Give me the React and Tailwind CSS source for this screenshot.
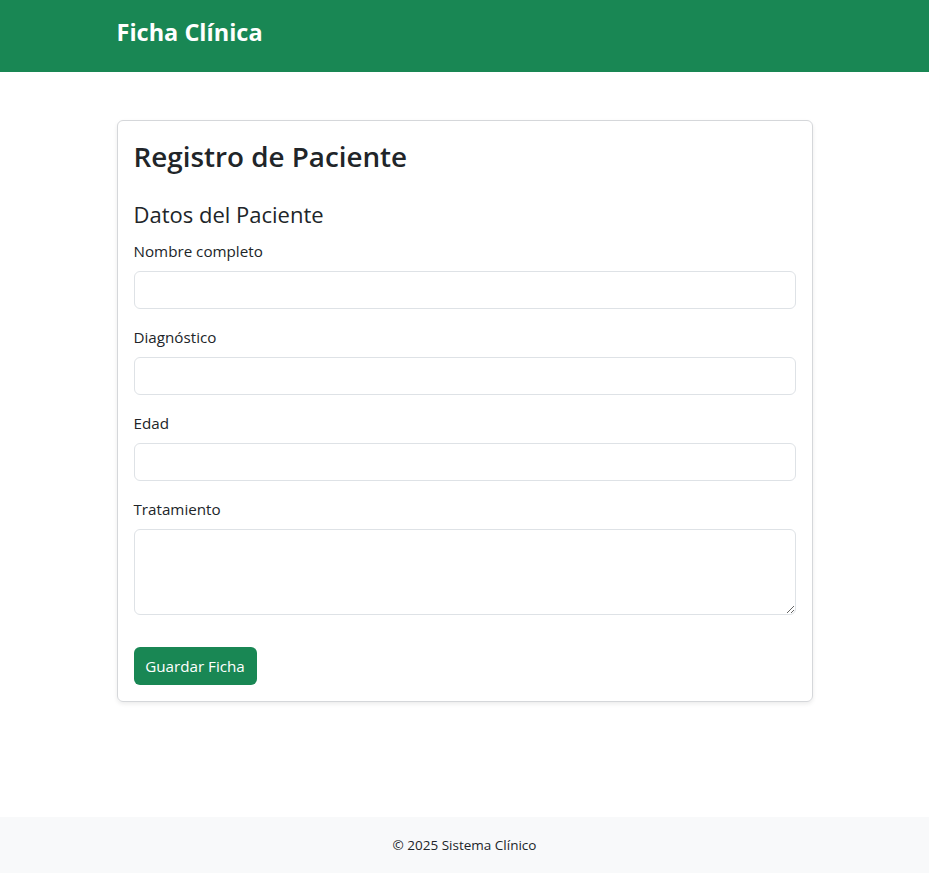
export default function App() {
  const font = { fontFamily: '"Open Sans", "Noto Sans", Arial, sans-serif' };
  return (
    <div className="min-h-screen flex flex-col bg-white text-[#212529]" style={font}>
      <nav className="h-[72px] bg-[#198754] flex items-center">
        <div className="w-[720px] mx-auto px-3 pb-[4px]">
          <span className="text-white font-bold text-[23.5px] leading-none">Ficha Clínica</span>
        </div>
      </nav>
      <main className="w-[720px] mx-auto px-3 mt-12">
        <div className="border border-[#d5d7da] rounded-[6px] shadow-[0_2px_4px_rgba(0,0,0,0.08)] p-4">
          <h2 className="text-[27.8px] font-semibold leading-[38px] mb-[25px]">Registro de Paciente</h2>
          <h4 className="text-[22px] leading-[28px] mb-[11px]">Datos del Paciente</h4>
          {["Nombre completo", "Diagnóstico", "Edad"].map((l) => (
            <div key={l} className="mb-4">
              <label className="block text-[15.2px] leading-6 mb-2">{l}</label>
              <input className="block w-full h-[38px] border border-[#dee2e6] rounded-[6px] px-3 outline-none" />
            </div>
          ))}
          <div className="mb-4">
            <label className="block text-[15.2px] leading-6 mb-2">Tratamiento</label>
            <textarea rows={3} className="block w-full h-[86px] border border-[#dee2e6] rounded-[6px] px-3 outline-none" />
          </div>
          <button className="mt-4 h-[38px] w-[123px] bg-[#198754] text-white text-[15.2px] rounded-[6px]">Guardar Ficha</button>
        </div>
      </main>
      <footer className="mt-auto h-14 bg-[#f8f9fa] flex items-center justify-center">
        <span className="text-[13.5px]">© 2025 Sistema Clínico</span>
      </footer>
    </div>
  );
}
